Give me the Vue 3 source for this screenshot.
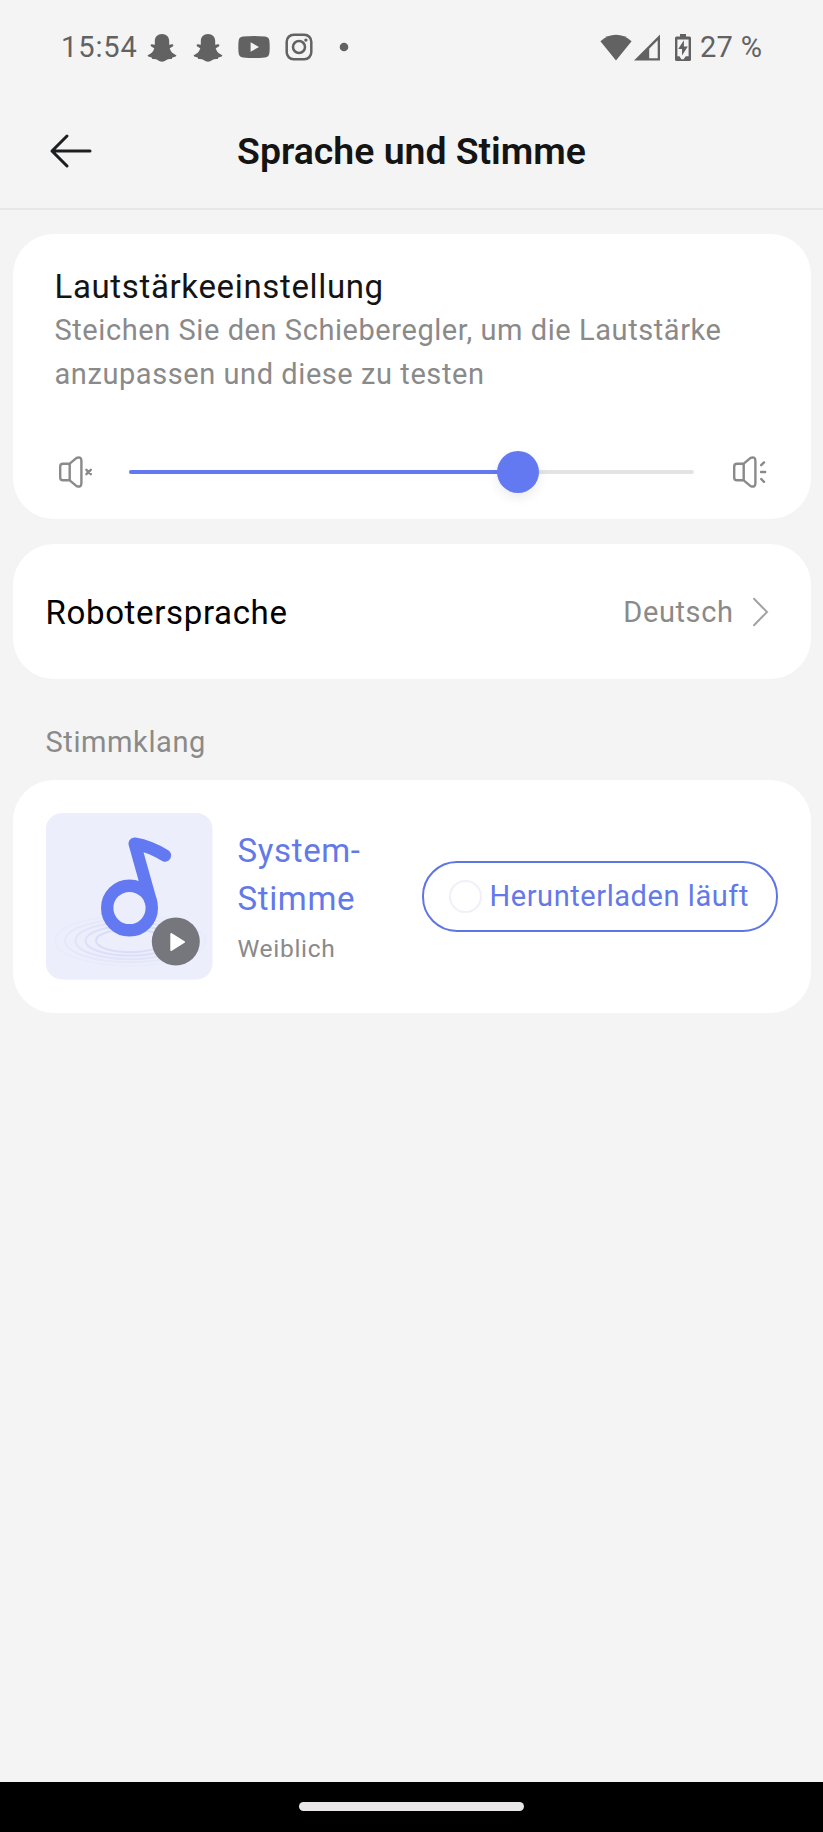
<script setup>
import { computed, ref } from 'vue'

const volume = ref(68.8)
const fillStyle = computed(() => ({ width: `${volume.value}%` }))
const thumbStyle = computed(() => ({ left: `${volume.value}%` }))

const ripples = [
  { rx: 34, ry: 11.5, o: 0.13 },
  { rx: 44.5, ry: 15, o: 0.11 },
  { rx: 54.5, ry: 18.5, o: 0.08 },
  { rx: 65, ry: 21.5, o: 0.05 },
  { rx: 75, ry: 25, o: 0.025 },
]
</script>

<template>
  <div class="screen">
    <header class="status">
      <span class="clock">15:54</span>
      <svg v-for="n in 2" :key="n" class="snap" width="30" height="28" viewBox="0 0 30 28">
        <path d="M15 0C19.4 0 22.2 3 22.2 7.2V10.8C23.4 11 24.6 9.9 25.9 10.5C26.8 11 26.4 12.2 25.4 12.8L22.7 14.3C23.6 17.6 25.8 19.8 28.8 20.9C29.9 21.4 29.3 22.3 28 22.7L25.4 23.4L24.7 25.1C22.6 24.8 20.8 25 19.3 26C16.5 28.2 13.5 28.2 10.7 26C9.2 25 7.4 24.8 5.3 25.1L4.6 23.4L2 22.7C.7 22.3 .1 21.4 1.2 20.9C4.2 19.8 6.4 17.6 7.3 14.3L4.6 12.8C3.6 12.2 3.2 11 4.1 10.5C5.4 9.9 6.6 11 7.8 10.8V7.2C7.8 3 10.6 0 15 0Z" />
      </svg>
      <svg class="video" width="32" height="22" viewBox="0 0 32 22">
        <path fill-rule="evenodd" d="M5 .6Q16 -.4 27 .6Q31 .9 31.4 5Q32 11 31.4 17Q31 21.1 27 21.4Q16 22.4 5 21.4Q1 21.1 .6 17Q0 11 .6 5Q1 .9 5 .6ZM12.6 6.3V15.7L21 11Z" />
      </svg>
      <svg class="camera" width="28" height="28" viewBox="0 0 28 28">
        <rect x="1.7" y="1.7" width="24.6" height="24.6" rx="7" fill="none" stroke="#626262" stroke-width="2.5" />
        <circle cx="14" cy="14" r="6" fill="none" stroke="#626262" stroke-width="2.5" />
        <circle cx="20.9" cy="7.1" r="1.7" />
      </svg>
      <svg class="dot" width="10" height="10" viewBox="0 0 10 10"><circle cx="5" cy="5" r="4.3" /></svg>
      <span class="spacer"></span>
      <svg class="wifi" width="32" height="27" viewBox="0 0 32 27">
        <path d="M.4 7.2C9.6 -1.4 22.4 -1.4 31.6 7.2L16 26.4Z" />
      </svg>
      <svg class="signal" width="27" height="27" viewBox="0 0 27 27">
        <path fill-rule="evenodd" d="M0 26.5L26 .5V26.5ZM15.2 14.8V24.2H23.7V6.3Z" />
      </svg>
      <svg class="battery" width="16" height="27" viewBox="0 0 16 27">
        <path fill-rule="evenodd" d="M5 0H11V2.6H14.5Q16 2.6 16 4.1V25.5Q16 27 14.5 27H1.5Q0 27 0 25.5V4.1Q0 2.6 1.5 2.6H5ZM2.4 5.4V22.2H4.4L6.4 25.2H8.6L10.8 22.2H13.6V5.4Z" />
        <path d="M8.9 6.2L3.2 15H7V21.6L12.8 12.6H8.9Z" />
      </svg>
      <span class="percent">27 %</span>
    </header>

    <nav class="nav">
      <svg class="back" width="44" height="36" viewBox="0 0 44 36">
        <path d="M18 3L3 18L18 33M3 18H41" fill="none" stroke="#1d1e20" stroke-width="3" stroke-linecap="round" stroke-linejoin="round" />
      </svg>
      <h1>Sprache und Stimme</h1>
    </nav>

    <main>
      <section class="card volume">
        <h2>Lautstärkeeinstellung</h2>
        <p>Steichen Sie den Schieberegler, um die Lautstärke<br />anzupassen und diese zu testen</p>
        <div class="slider">
          <svg class="icon" width="40" height="40" viewBox="0 0 40 40">
            <path d="M15 11.7H8Q5.2 11.7 5.2 14.5V25.5Q5.2 28.3 8 28.3H15M14.7 11.7V28.3M14.7 11.7L21.6 5.9Q26.4 4.2 26.4 9V31Q26.4 35.8 21.6 34.1L14.7 28.3" />
            <path d="M31.4 17.8L35.8 22.2M35.8 17.8L31.4 22.2" />
          </svg>
          <div class="track">
            <div class="fill" :style="fillStyle"></div>
            <div class="thumb" :style="thumbStyle"></div>
          </div>
          <svg class="icon" width="40" height="40" viewBox="0 0 40 40">
            <path d="M15 11.7H8Q5.2 11.7 5.2 14.5V25.5Q5.2 28.3 8 28.3H15M14.7 11.7V28.3M14.7 11.7L21.6 5.9Q26.4 4.2 26.4 9V31Q26.4 35.8 21.6 34.1L14.7 28.3" />
            <path d="M32.2 13.2L35 10.4M32 20H36.2M32.2 27L35 29.8" />
          </svg>
        </div>
      </section>

      <section class="card language">
        <h2>Robotersprache</h2>
        <span class="value">Deutsch</span>
        <svg width="16" height="30" viewBox="0 0 16 30">
          <path d="M1 1.8L14 15L1 28.2" fill="none" stroke="#a3a3a3" stroke-width="2" stroke-linecap="round" />
        </svg>
      </section>

      <h3>Stimmklang</h3>

      <section class="card voice">
        <svg class="cover" width="167" height="167" viewBox="0 0 167 167">
          <rect width="166.5" height="166.5" rx="16" fill="#eceefc" />
          <ellipse v-for="r in ripples" :key="r.rx" cx="84" :cy="127.7" :rx="r.rx" :ry="r.ry" fill="none" stroke="#5b6cd8" :stroke-opacity="r.o" stroke-width="2" />
          <circle cx="83.5" cy="95" r="22.3" fill="#eceefc" stroke="#6379f2" stroke-width="12.4" />
          <path d="M105 89L88.7 30.6Q104 33.2 119 42.5" fill="none" stroke="#6379f2" stroke-width="12.4" stroke-linecap="round" stroke-linejoin="round" />
          <circle cx="129.8" cy="128.5" r="24" fill="#76777d" />
          <path d="M125.3 121L138 129L125.3 137Z" fill="#fff" stroke="#fff" stroke-width="2" stroke-linejoin="round" />
        </svg>
        <div class="info">
          <div class="name">System-<br />Stimme</div>
          <div class="kind">Weiblich</div>
        </div>
        <button class="download" type="button">
          <span class="ring"></span>
          <span>Herunterladen läuft</span>
        </button>
      </section>
    </main>

    <footer class="gesture"><span></span></footer>
  </div>
</template>

<style>
body {
  background: #f4f4f4;
}
</style>

<style scoped>
.screen {
  box-sizing: border-box;
  width: 823px;
  height: 1832px;
  display: flex;
  flex-direction: column;
  overflow: hidden;
  background: #f4f4f4;
  color: #141414;
  font-family: Roboto, "Liberation Sans", sans-serif;
}
svg {
  display: block;
  flex: none;
}
h1, h2, h3, p {
  margin: 0;
  font-weight: 400;
  white-space: nowrap;
}
.status {
  height: 94px;
  flex: none;
  display: flex;
  align-items: center;
  padding: 0 0 0 61px;
  color: #626262;
  fill: #626262;
  font: 450 29px/32px Roboto, sans-serif;
}
.clock {
  width: 86px;
  letter-spacing: 0.9px;
  white-space: nowrap;
}
.snap {
  margin-right: 16px;
  position: relative;
  top: 1px;
}
.video { margin: 0 16px 0 -1px; }
.camera { margin: 0 26px 0 -1px; }
.spacer { flex: 1; }
.wifi { margin-right: 2px; }
.signal { margin-right: 14px; }
.battery { margin-right: 9px; }
.percent {
  width: 123px;
  letter-spacing: 0.3px;
  white-space: nowrap;
}
.nav {
  box-sizing: border-box;
  height: 116px;
  flex: none;
  display: grid;
  grid-template-columns: 100px 1fr 100px;
  align-items: center;
  border-bottom: 2px solid #e7e7ea;
}
.back { margin-left: 49px; }
h1 {
  text-align: center;
  font-size: 37.4px;
  line-height: 45px;
  font-weight: 600;
}
main {
  flex: 1;
  padding: 24px 12.5px 0;
}
.card {
  box-sizing: border-box;
  background: #fff;
  border-radius: 41px;
}
h2 {
  font-size: 33px;
  letter-spacing: 0.65px;
}
.volume {
  height: 284.5px;
  padding: 32px 41.5px 0 42px;
}
.volume h2 { line-height: 42px; }
.volume p {
  font-size: 29px;
  line-height: 44px;
  letter-spacing: 0.57px;
  color: #8a8a8a;
}
.slider {
  display: flex;
  align-items: center;
  height: 42px;
  margin-top: 55px;
}
.icon {
  fill: none;
  stroke: #8a8a8a;
  stroke-width: 2.4;
  stroke-linecap: round;
  stroke-linejoin: round;
}
.track {
  position: relative;
  flex: 1;
  height: 4px;
  margin: 0 35px 0 34px;
  border-radius: 2px;
  background: #e3e3e3;
}
.fill {
  height: 4px;
  border-radius: 2px;
  background: #6379f2;
}
.thumb {
  position: absolute;
  top: -19px;
  width: 42px;
  height: 42px;
  margin-left: -21px;
  border-radius: 50%;
  background: #6379f2;
  box-shadow: 0 5px 12px rgba(0, 0, 0, 0.08);
}
.language {
  display: flex;
  align-items: center;
  height: 135px;
  margin-top: 25.5px;
  padding: 0 42px 0 33px;
}
.language h2 {
  flex: 1;
  padding-top: 2px;
  color: #000;
}
.value {
  margin-right: 19px;
  font-size: 29px;
  letter-spacing: 0.6px;
  color: #8a8a8a;
}
h3 {
  margin: 41px 0 15.5px 33px;
  font-size: 29px;
  line-height: 44px;
  letter-spacing: 0.6px;
  color: #8a8a8a;
}
.voice {
  display: flex;
  align-items: center;
  height: 233px;
  padding: 0 33px;
}
.info {
  flex: 1;
  margin-left: 25px;
}
.name {
  margin-top: 2px;
  font-size: 33px;
  line-height: 48px;
  letter-spacing: 0.65px;
  color: #6379e8;
}
.kind {
  margin-top: 8px;
  font-size: 24.6px;
  line-height: 36px;
  letter-spacing: 0.65px;
  color: #8a8a8a;
}
.download {
  box-sizing: border-box;
  display: flex;
  align-items: center;
  width: 356px;
  height: 71px;
  padding: 0 0 0 25px;
  border: 2px solid #6075e4;
  border-radius: 35px;
  background: #fff;
  color: #6379e8;
  font-family: inherit;
  font-size: 29px;
  letter-spacing: 0.57px;
  white-space: nowrap;
}
.ring {
  box-sizing: border-box;
  flex: none;
  width: 33px;
  height: 33px;
  margin-right: 8px;
  border: 2px solid #f0f0fa;
  border-radius: 50%;
}
.gesture {
  flex: none;
  display: flex;
  justify-content: center;
  height: 50.5px;
  background: #000;
}
.gesture span {
  width: 225px;
  height: 9px;
  margin-top: 20.5px;
  border-radius: 5px;
  background: #e8e6e6;
}
</style>
